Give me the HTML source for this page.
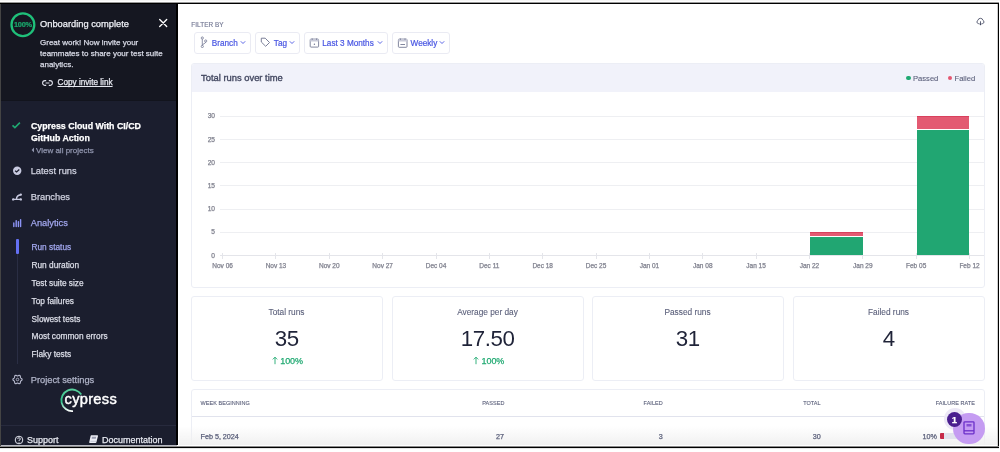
<!DOCTYPE html>
<html><head><meta charset="utf-8">
<style>
*{margin:0;padding:0;box-sizing:border-box}
html,body{width:1000px;height:452px;overflow:hidden;background:#fff;font-family:"Liberation Sans",sans-serif}
body>*{will-change:transform}
.a,.nav,.sub,.stt,.stv,.th,.td,.xl,.yl{-webkit-text-stroke-width:0.25px}
.a{position:absolute;white-space:nowrap}
#sb{position:absolute;left:0;top:0;width:177px;height:445px;background:#1b1e2e;clip-path:inset(4px 0 0 1px)}
#onb{position:absolute;left:0;top:0;width:177px;height:101px;background:#151721;border-bottom:1px solid #12141d}
.nav{position:absolute;left:30.7px;font-size:9.3px;color:#d0d2e0}
.sub{position:absolute;left:31.5px;font-size:8.3px;color:#dcdee8}
.card{position:absolute;border:1px solid #eceef5;border-radius:3px;background:#fff}
.btn{position:absolute;top:32px;height:22px;border:1px solid #eaebf3;border-radius:3px;background:#fff}
.btxt{position:absolute;font-size:8.2px;color:#4956e3;-webkit-text-stroke:0.2px #4956e3;white-space:nowrap}
.yl{position:absolute;font-size:6.6px;color:#80828f;text-align:right;width:20px}
.xl{position:absolute;top:262px;font-size:6.5px;color:#80828f;width:40px;text-align:center}
.gl{position:absolute;left:220px;width:764px;height:1px;background:#eeeff2}
.stt{position:absolute;top:306.9px;font-size:8.3px;color:#5a5f7a;-webkit-text-stroke:0.1px #5a5f7a;text-align:center;width:191px}
.stv{position:absolute;top:326.3px;font-size:22.3px;color:#1f2338;-webkit-text-stroke-width:0;letter-spacing:-0.4px;text-indent:0.4px;text-align:center;width:191px}
.stp{position:absolute;top:356.4px;font-size:9px;color:#1fa971;width:60px;letter-spacing:-0.05px}
.th{position:absolute;top:399.9px;font-size:5.5px;color:#5a5f7a;letter-spacing:0.05px;-webkit-text-stroke:0.1px #5a5f7a}
.td{position:absolute;top:432px;font-size:7.2px;color:#5a5f7a}
</style></head><body>

<!-- sidebar -->
<div id="sb">
  <div id="onb"></div>
  <svg class="a" style="left:9px;top:11px" width="28" height="28" viewBox="0 0 28 28">
    <circle cx="13.9" cy="13.7" r="11.4" fill="none" stroke="#1fc07a" stroke-width="2.3"/>
    <text x="13.9" y="16.3" font-family="Liberation Sans" font-size="7.4" font-weight="bold" fill="#1aa86c" stroke="#1aa86c" stroke-width="0.2" text-anchor="middle" letter-spacing="-0.25">100%</text>
  </svg>
  <div class="a" style="left:40px;top:19.38px;font-size:9.3px;color:#eef0f6">Onboarding complete</div>
  <svg class="a" style="left:158px;top:18px" width="11" height="11" viewBox="0 0 11 11"><path d="M1.7 1.5L8.7 8.5M8.7 1.5L1.7 8.5" stroke="#fff" stroke-width="1.35" stroke-linecap="round"/></svg>
  <div class="a" style="left:40px;top:38.2px;font-size:8px;line-height:10.7px;color:#d8dae6;white-space:normal;width:130px">Great work! Now invite your teammates to share your test suite analytics.</div>
  <svg class="a" style="left:42px;top:79.3px" width="11" height="8" viewBox="0 0 11 8"><path d="M4.2 1.6H3A2.4 2.4 0 0 0 3 6.4H4.2M6.8 1.6H8A2.4 2.4 0 0 1 8 6.4H6.8M3.6 4H7.4" fill="none" stroke="#e1e3ed" stroke-width="1.1"/></svg>
  <div class="a" style="left:57.5px;top:78.4px;font-size:8.2px;color:#e6e8f0;text-decoration:underline">Copy invite link</div>

  <svg class="a" style="left:11px;top:121px" width="10" height="9" viewBox="0 0 10 9"><path d="M1.5 4.3L3.9 6.6L8.9 1.6" fill="none" stroke="#1fa971" stroke-width="1.6"/></svg>
  <div class="a" style="left:31px;top:119.7px;font-size:8.8px;line-height:12px;color:#fff;font-weight:bold;white-space:normal;width:140px">Cypress Cloud With CI/CD<br>GitHub Action</div>
  <svg class="a" style="left:31px;top:147px" width="4" height="6" viewBox="0 0 4 6"><path d="M3 0.6L0.6 3L3 5.4Z" fill="#9095ad"/></svg>
  <div class="a" style="left:36px;top:145.56px;font-size:8px;color:#9095ad">View all projects</div>

  <svg class="a" style="left:12px;top:166px" width="10" height="10" viewBox="0 0 10 10"><circle cx="5.2" cy="4.7" r="4.2" fill="#c8cae0"/><path d="M3.1 4.7L4.6 6L7.3 3.5" fill="none" stroke="#1b1e2e" stroke-width="1.2"/></svg>
  <div class="nav" style="top:166.28px">Latest runs</div>
  <svg class="a" style="left:11px;top:191px" width="12" height="11" viewBox="0 0 12 11"><path d="M2.2 8.4H10M5.4 8.4C5.6 5.4 6.8 4 9.6 4" fill="none" stroke="#c8cae0" stroke-width="1.4"/><circle cx="2.2" cy="8.4" r="1.2" fill="#c8cae0"/><circle cx="9.8" cy="8.4" r="1.2" fill="#c8cae0"/><circle cx="9.8" cy="3.6" r="1.2" fill="#c8cae0"/></svg>
  <div class="nav" style="top:191.98px">Branches</div>
  <svg class="a" style="left:11px;top:216px" width="12" height="12" viewBox="0 0 12 12"><path d="M2.8 10.5V7M5.2 10.5V4.6M7.4 10.5V5.6M9.6 10.5V3.6" fill="none" stroke="#8c93f5" stroke-width="1.4" stroke-linecap="round"/></svg>
  <div class="nav" style="top:217.68px;color:#a2a7ee">Analytics</div>

  <div class="a" style="left:17px;top:239px;width:1px;height:124.5px;background:#2a2e44"></div>
  <div class="a" style="left:16.2px;top:239.3px;width:2.6px;height:15.1px;background:#6470f3;border-radius:1px"></div>
  <div class="sub" style="top:242.29px;color:#a2a7ee">Run status</div>
  <div class="sub" style="top:260.11px">Run duration</div>
  <div class="sub" style="top:277.93px">Test suite size</div>
  <div class="sub" style="top:295.75px">Top failures</div>
  <div class="sub" style="top:313.57px">Slowest tests</div>
  <div class="sub" style="top:331.39px">Most common errors</div>
  <div class="sub" style="top:349.21px">Flaky tests</div>

  <svg class="a" style="left:11.9px;top:373.9px" width="11" height="11" viewBox="0 0 11 11"><path d="M10.15 5.50 L10.06 5.90 L9.81 6.26 L9.46 6.56 L9.09 6.81 L8.78 7.03 L8.57 7.27 L8.47 7.58 L8.43 7.96 L8.40 8.40 L8.31 8.85 L8.12 9.25 L7.83 9.53 L7.43 9.65 L7.00 9.61 L6.56 9.46 L6.16 9.27 L5.82 9.11 L5.50 9.05 L5.18 9.11 L4.84 9.27 L4.44 9.46 L4.00 9.61 L3.57 9.65 L3.18 9.53 L2.88 9.25 L2.69 8.85 L2.60 8.40 L2.57 7.96 L2.53 7.58 L2.43 7.28 L2.22 7.03 L1.91 6.81 L1.54 6.56 L1.19 6.26 L0.94 5.90 L0.85 5.50 L0.94 5.10 L1.19 4.74 L1.54 4.44 L1.91 4.19 L2.22 3.97 L2.43 3.72 L2.53 3.42 L2.57 3.04 L2.60 2.60 L2.69 2.15 L2.88 1.75 L3.17 1.47 L3.57 1.35 L4.00 1.39 L4.44 1.54 L4.84 1.73 L5.18 1.89 L5.50 1.95 L5.82 1.89 L6.16 1.73 L6.56 1.54 L7.00 1.39 L7.43 1.35 L7.82 1.47 L8.12 1.75 L8.31 2.15 L8.40 2.60 L8.43 3.04 L8.47 3.42 L8.57 3.73 L8.78 3.97 L9.09 4.19 L9.46 4.44 L9.81 4.74 L10.06 5.10Z" fill="none" stroke="#b4b7cb" stroke-width="1.1" stroke-linejoin="round"/><circle cx="5.5" cy="5.5" r="1.3" fill="none" stroke="#b4b7cb" stroke-width="0.9"/></svg>
  <div class="nav" style="top:374.58px;color:#afb3c7">Project settings</div>

  <svg class="a" style="left:56px;top:383px" width="70" height="32" viewBox="0 0 70 32">
    <defs><linearGradient id="lg" x1="0" y1="0" x2="0" y2="1"><stop offset="0" stop-color="#58cf9c"/><stop offset="0.55" stop-color="#2fc38a"/><stop offset="1" stop-color="#ffffff"/></linearGradient></defs>
    <path d="M25.3 11.6A10.8 10.8 0 1 0 17 28.1" fill="none" stroke="url(#lg)" stroke-width="1.8"/>
    <text x="8.6" y="21.2" font-family="Liberation Sans" font-size="14.6" fill="#fff" stroke="#fff" stroke-width="0.45" letter-spacing="0.3">cypress</text>
  </svg>

  <div class="a" style="left:1px;top:424.6px;width:176px;height:1px;background:#272a3d"></div>
  <svg class="a" style="left:13.5px;top:434.5px" width="10" height="10" viewBox="0 0 10 10"><circle cx="5" cy="5" r="3.8" fill="none" stroke="#e1e3ed" stroke-width="1"/><path d="M3.7 4.1A1.3 1.3 0 1 1 5 5.3V6" fill="none" stroke="#e1e3ed" stroke-width="0.9"/><circle cx="5" cy="7.3" r="0.5" fill="#e1e3ed"/></svg>
  <div class="a" style="left:27px;top:434.86px;font-size:9px;color:#e6e8f0">Support</div>
  <svg class="a" style="left:88px;top:434px" width="11" height="10" viewBox="0 0 11 10"><path d="M3.2 1.2H9.4Q10.2 1.2 10 2L8.4 8.2Q8.2 9 7.4 9H1.8Q1 9 1.2 8.2L2.6 2Q2.8 1.2 3.2 1.2Z" fill="#eceef5"/><path d="M4 2.8H8.2L7.8 4.8H3.6Z" fill="#9a9db0"/><path d="M2.4 7.3H8.6" stroke="#9a9db0" stroke-width="0.5"/></svg>
  <div class="a" style="left:102px;top:434.86px;font-size:9px;color:#e6e8f0">Documentation</div>
</div>
<div class="a" style="left:176px;top:4px;width:2px;height:441px;background:#000"></div>

<div class="a" style="left:0;top:0;width:1000px;height:452px;clip-path:inset(4px 2px 7px 178px)">
<!-- main -->
<div class="a" style="left:191.3px;top:21.3px;font-size:6.4px;color:#747994;letter-spacing:0.05px;-webkit-text-stroke:0.15px #747994">FILTER BY</div>

<div class="btn" style="left:193.5px;width:57px"></div>
<svg class="a" style="left:199px;top:36px" width="9" height="12" viewBox="0 0 9 12"><circle cx="3.3" cy="2" r="1.1" fill="none" stroke="#747994" stroke-width="0.8"/><circle cx="3.3" cy="10.5" r="1.1" fill="none" stroke="#747994" stroke-width="0.8"/><circle cx="6.7" cy="5" r="1.1" fill="none" stroke="#747994" stroke-width="0.8"/><path d="M3.3 3.1V9.4M6.7 6.1C6.7 7.6 3.3 7.8 3.3 9.4" fill="none" stroke="#747994" stroke-width="0.8"/></svg>
<span class="btxt" style="left:211.8px;top:39.1px">Branch</span><svg class="a" style="left:239.6px;top:40px" width="6" height="5" viewBox="0 0 6 5"><path d="M0.8 1.3L3 3.5L5.2 1.3" fill="none" stroke="#4956e3" stroke-width="0.9"/></svg>
<div class="btn" style="left:255px;width:45px"></div>
<svg class="a" style="left:260px;top:37.3px" width="11" height="11" viewBox="0 0 11 11"><path d="M1.3 1.2H5.2L9.5 5.5L5.7 9.3L1.3 5Z" fill="none" stroke="#747994" stroke-width="0.95" stroke-linejoin="round"/></svg>
<span class="btxt" style="left:273.8px;top:39.1px">Tag</span><svg class="a" style="left:288.8px;top:40px" width="6" height="5" viewBox="0 0 6 5"><path d="M0.8 1.3L3 3.5L5.2 1.3" fill="none" stroke="#4956e3" stroke-width="0.9"/></svg>
<div class="btn" style="left:304px;width:84px"></div>
<svg class="a" style="left:309px;top:38px" width="11" height="10" viewBox="0 0 11 10"><rect x="1.2" y="1.1" width="8.4" height="8" rx="0.8" fill="none" stroke="#747994" stroke-width="0.9"/><rect x="1.2" y="1.1" width="8.4" height="2.4" fill="#c8cad8"/><path d="M3.2 0.4V2M7.6 0.4V2" stroke="#747994" stroke-width="0.8"/><circle cx="5.4" cy="6.3" r="0.7" fill="#747994"/></svg>
<span class="btxt" style="left:322.3px;top:39.1px">Last 3 Months</span><svg class="a" style="left:376.6px;top:40px" width="6" height="5" viewBox="0 0 6 5"><path d="M0.8 1.3L3 3.5L5.2 1.3" fill="none" stroke="#4956e3" stroke-width="0.9"/></svg>
<div class="btn" style="left:392px;width:57.5px"></div>
<svg class="a" style="left:397px;top:38px" width="11" height="10" viewBox="0 0 11 10"><rect x="1.4" y="1.1" width="8.6" height="8.2" rx="0.8" fill="none" stroke="#747994" stroke-width="0.9"/><rect x="1.4" y="1.1" width="8.6" height="2.4" fill="#c8cad8"/><path d="M3.4 0.4V2M8 0.4V2" stroke="#747994" stroke-width="0.8"/><path d="M3.4 6.5H8" stroke="#747994" stroke-width="0.9"/></svg>
<span class="btxt" style="left:410.6px;top:39.1px">Weekly</span><svg class="a" style="left:439.3px;top:40px" width="6" height="5" viewBox="0 0 6 5"><path d="M0.8 1.3L3 3.5L5.2 1.3" fill="none" stroke="#4956e3" stroke-width="0.9"/></svg>

<svg class="a" style="left:976px;top:17.3px" width="9" height="9" viewBox="0 0 9 9"><path d="M2.9 6.6H2.4A1.7 1.7 0 0 1 1.9 3.4A2.6 2.6 0 0 1 7 3.4A1.7 1.7 0 0 1 6.6 6.6H6.1" fill="none" stroke="#434861" stroke-width="0.85" stroke-linecap="round"/><path d="M4.5 4.3V7.5" stroke="#434861" stroke-width="0.85"/><path d="M3.2 6.8L4.5 8.4L5.8 6.8Z" fill="#434861"/></svg>
<!-- chart card -->
<div class="card" style="left:191px;top:62.6px;width:794px;height:225.4px"></div>
<div class="a" style="left:192px;top:63.6px;width:792px;height:28.8px;background:#f1f2fa;border-radius:2px 2px 0 0"></div>
<div class="a" style="left:201px;top:72.3px;font-size:9.4px;color:#434861;-webkit-text-stroke:0.35px #434861">Total runs over time</div>

<!-- stat cards -->
<div class="card" style="left:191px;top:296px;width:192px;height:85px"></div>
<div class="card" style="left:392px;top:296px;width:192px;height:85px"></div>
<div class="card" style="left:592px;top:296px;width:192px;height:85px"></div>
<div class="card" style="left:793px;top:296px;width:192px;height:85px"></div>

<!-- table card -->
<div class="card" style="left:191px;top:389px;width:794px;height:80px"></div>

<div class="yl" style="left:195px;top:251.50px">0</div>
<div class="gl" style="top:231.82px"></div>
<div class="yl" style="left:195px;top:228.32px">5</div>
<div class="gl" style="top:208.63px"></div>
<div class="yl" style="left:195px;top:205.13px">10</div>
<div class="gl" style="top:185.45px"></div>
<div class="yl" style="left:195px;top:181.95px">15</div>
<div class="gl" style="top:162.27px"></div>
<div class="yl" style="left:195px;top:158.77px">20</div>
<div class="gl" style="top:139.08px"></div>
<div class="yl" style="left:195px;top:135.58px">25</div>
<div class="gl" style="top:115.90px"></div>
<div class="yl" style="left:195px;top:112.40px">30</div>
<div class="a" style="left:220px;top:255.00px;width:764px;height:1px;background:#e4e5ea"></div>
<div class="a" style="left:222.10px;top:252.5px;width:1px;height:6px;background:#e4e5ea"></div>
<div class="xl" style="left:202.60px">Nov 06</div>
<div class="a" style="left:275.45px;top:252.5px;width:1px;height:6px;background:#e4e5ea"></div>
<div class="xl" style="left:255.95px">Nov 13</div>
<div class="a" style="left:328.80px;top:252.5px;width:1px;height:6px;background:#e4e5ea"></div>
<div class="xl" style="left:309.30px">Nov 20</div>
<div class="a" style="left:382.15px;top:252.5px;width:1px;height:6px;background:#e4e5ea"></div>
<div class="xl" style="left:362.65px">Nov 27</div>
<div class="a" style="left:435.50px;top:252.5px;width:1px;height:6px;background:#e4e5ea"></div>
<div class="xl" style="left:416.00px">Dec 04</div>
<div class="a" style="left:488.85px;top:252.5px;width:1px;height:6px;background:#e4e5ea"></div>
<div class="xl" style="left:469.35px">Dec 11</div>
<div class="a" style="left:542.20px;top:252.5px;width:1px;height:6px;background:#e4e5ea"></div>
<div class="xl" style="left:522.70px">Dec 18</div>
<div class="a" style="left:595.55px;top:252.5px;width:1px;height:6px;background:#e4e5ea"></div>
<div class="xl" style="left:576.05px">Dec 25</div>
<div class="a" style="left:648.90px;top:252.5px;width:1px;height:6px;background:#e4e5ea"></div>
<div class="xl" style="left:629.40px">Jan 01</div>
<div class="a" style="left:702.25px;top:252.5px;width:1px;height:6px;background:#e4e5ea"></div>
<div class="xl" style="left:682.75px">Jan 08</div>
<div class="a" style="left:755.60px;top:252.5px;width:1px;height:6px;background:#e4e5ea"></div>
<div class="xl" style="left:736.10px">Jan 15</div>
<div class="a" style="left:808.95px;top:252.5px;width:1px;height:6px;background:#e4e5ea"></div>
<div class="xl" style="left:789.45px">Jan 22</div>
<div class="a" style="left:862.30px;top:252.5px;width:1px;height:6px;background:#e4e5ea"></div>
<div class="xl" style="left:842.80px">Jan 29</div>
<div class="a" style="left:915.65px;top:252.5px;width:1px;height:6px;background:#e4e5ea"></div>
<div class="xl" style="left:896.15px">Feb 05</div>
<div class="a" style="left:969.00px;top:252.5px;width:1px;height:6px;background:#e4e5ea"></div>
<div class="xl" style="left:949.50px">Feb 12</div>
<div class="a" style="left:810.10px;top:236.95px;width:52.60px;height:18.55px;background:#21a672"></div>
<div class="a" style="left:810.10px;top:232.32px;width:52.60px;height:3.44px;background:#e35a72;border-top:1px solid #d9405d"></div>
<div class="a" style="left:916.80px;top:130.31px;width:52.30px;height:125.19px;background:#21a672"></div>
<div class="a" style="left:916.80px;top:116.40px;width:52.30px;height:12.71px;background:#e35a72;border-top:1px solid #d9405d"></div>
<div class="a" style="left:906px;top:75.8px;width:4.5px;height:4.5px;border-radius:50%;background:#1fa971"></div>
<div class="a" style="left:913px;top:73.6px;font-size:7.6px;color:#5a5f7a;-webkit-text-stroke:0.1px #5a5f7a">Passed</div>
<div class="a" style="left:947.5px;top:75.8px;width:4.5px;height:4.5px;border-radius:50%;background:#e45770"></div>
<div class="a" style="left:954.5px;top:73.6px;font-size:7.6px;color:#5a5f7a;-webkit-text-stroke:0.1px #5a5f7a">Failed</div>
<div class="stt" style="left:191px">Total runs</div>
<div class="stv" style="left:191px">35</div>
<div class="stp" style="left:280.2px">100%</div><svg class="a" style="left:271.5px;top:356px" width="6" height="9" viewBox="0 0 6 9"><path d="M3 8.2V1.2M0.8 3.4L3 1.2L5.2 3.4" fill="none" stroke="#1fa971" stroke-width="0.9"/></svg>
<div class="stt" style="left:392px">Average per day</div>
<div class="stv" style="left:392px">17.50</div>
<div class="stp" style="left:481.5px">100%</div><svg class="a" style="left:473px;top:356px" width="6" height="9" viewBox="0 0 6 9"><path d="M3 8.2V1.2M0.8 3.4L3 1.2L5.2 3.4" fill="none" stroke="#1fa971" stroke-width="0.9"/></svg>
<div class="stt" style="left:592px">Passed runs</div>
<div class="stv" style="left:592px">31</div>
<div class="stt" style="left:793px">Failed runs</div>
<div class="stv" style="left:793px">4</div>

<div class="th" style="left:200.5px">WEEK BEGINNING</div>
<div class="th" style="left:404px;width:100.5px;text-align:right">PASSED</div>
<div class="th" style="left:562px;width:100.8px;text-align:right">FAILED</div>
<div class="th" style="left:720px;width:100.7px;text-align:right">TOTAL</div>
<div class="th" style="left:875px;width:100px;text-align:right">FAILURE RATE</div>
<div class="a" style="left:192px;top:415.5px;width:792px;height:1px;background:#e1e3ed"></div>
<div class="a" style="left:179px;top:426px;width:819px;height:19px;background:linear-gradient(rgba(242,242,242,0),rgba(240,240,240,0.95))"></div>
<div class="td" style="left:200.5px">Feb 5, 2024</div>
<div class="td" style="left:404px;width:100px;text-align:right">27</div>
<div class="td" style="left:562px;width:100.8px;text-align:right">3</div>
<div class="td" style="left:720px;width:100.7px;text-align:right">30</div>
<div class="td" style="left:880px;width:57px;text-align:right">10%</div>
<div class="a" style="left:939.5px;top:433px;width:40px;height:6px;background:#e1e3ed;border-radius:1px"></div>
<div class="a" style="left:939.5px;top:433px;width:4px;height:6px;background:#c62b49;border-radius:1px 0 0 1px"></div>
<!-- floating help -->
<div class="a" style="left:943.5px;top:408px;width:22px;height:22px;border-radius:50%;background:#ece8f6"></div>
<div class="a" style="left:953.4px;top:412.9px;width:31.5px;height:31.5px;border-radius:50%;background:#c59cf2"></div>
<svg class="a" style="left:962px;top:420px" width="14" height="15" viewBox="0 0 14 15"><rect x="2" y="1.8" width="10" height="12" rx="0.8" fill="none" stroke="#6b2fc9" stroke-width="1.3"/><path d="M2 10.8H12" stroke="#6b2fc9" stroke-width="1.3"/><rect x="4.5" y="4" width="5" height="2.5" fill="#6b2fc9" opacity="0.7"/></svg>
<div class="a" style="left:947px;top:411.5px;width:15px;height:15px;border-radius:50%;background:#4a1f8f;color:#fff;font-size:9.5px;font-weight:bold;text-align:center;line-height:15px">1</div>
</div>
<!-- frame -->
<div class="a" style="left:0;top:0;width:1000px;height:1px;background:#f6f6f6"></div>
<div class="a" style="left:0;top:2px;width:999px;height:1px;background:#999"></div>
<div class="a" style="left:0;top:3px;width:999px;height:1px;background:#000"></div>
<div class="a" style="left:0;top:4px;width:1px;height:443px;background:#444"></div>
<div class="a" style="left:997px;top:4px;width:1px;height:442px;background:#cfcfcf"></div>
<div class="a" style="left:998px;top:3px;width:1px;height:445px;background:#000"></div>
<div class="a" style="left:1px;top:445px;width:176px;height:1px;background:#b8b9c2"></div>
<div class="a" style="left:0;top:446px;width:999px;height:1px;background:#8a8a8a"></div>
<div class="a" style="left:0;top:447px;width:999px;height:1px;background:#000"></div>
<div class="a" style="left:0;top:448px;width:999px;height:1px;background:#e4e4e4"></div>
</body></html>
